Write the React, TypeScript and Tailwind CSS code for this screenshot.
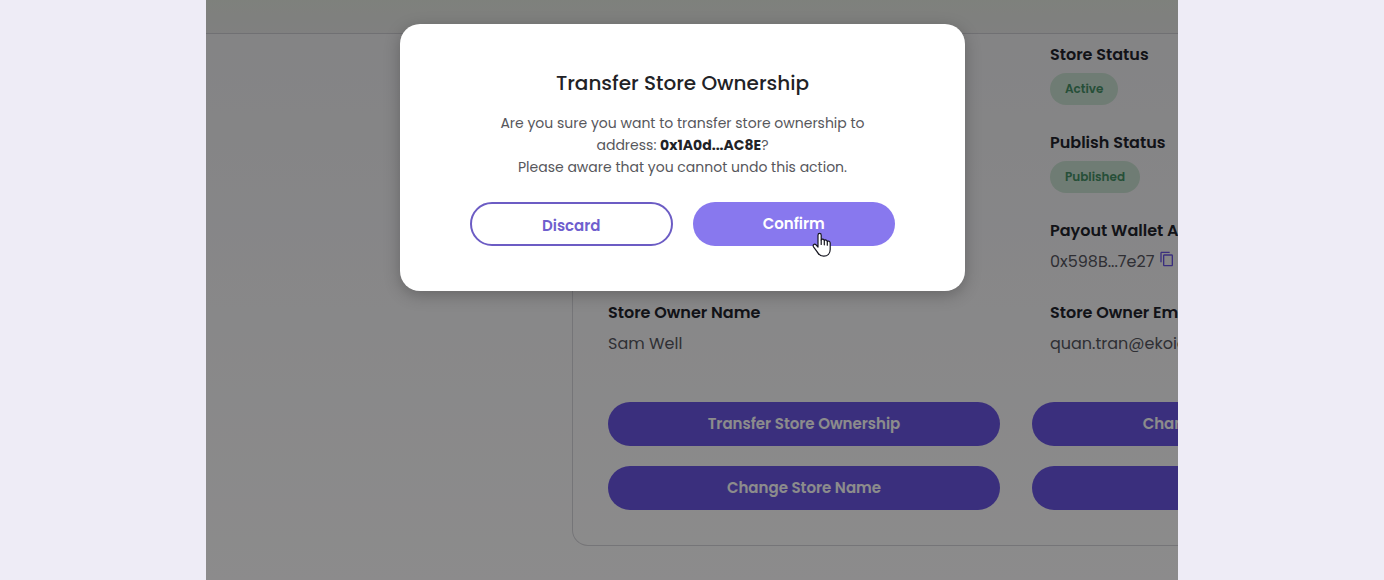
import type { ReactNode } from "react";
import { MdContentCopy } from "react-icons/md";

interface FieldProps {
    label: string;
    className?: string;
    children: ReactNode;
}

function Field({ label, className = "", children }: FieldProps) {
    return (
        <div className={className}>
            <dt className="mb-1.5 font-semibold text-[#22242c]">{label}</dt>
            <dd className="leading-[26px] text-[#56575f]">{children}</dd>
        </div>
    );
}

function StatusBadge({ children }: { children: ReactNode }) {
    return (
        <span className="flex h-8 w-fit items-center rounded-full bg-[#cbe2d3] px-[15px] text-xs font-semibold text-[#459066]">
            {children}
        </span>
    );
}

function ActionButton({ children }: { children: ReactNode }) {
    return (
        <button type="button" className="h-11 rounded-full bg-[#6b57e4] text-[15px] font-semibold text-white">
            {children}
        </button>
    );
}

function HandCursor() {
    return (
        <svg
            aria-hidden="true"
            viewBox="0 0 20 26"
            className="pointer-events-none absolute top-[30px] left-[119px] h-[26px] w-5"
            fill="white"
            stroke="#15151f"
            strokeWidth="1.2"
            strokeLinejoin="round"
            strokeLinecap="round"
        >
            <path d="M6 15V3.2C6 .8 9.2.8 9.2 3.2V8C9.8 6.6 12.3 7 12.3 8.6C13 7.5 15.3 7.9 15.3 9.6C16.2 8.6 18.2 9.2 18.2 11V17.5C18.2 21.5 15.6 24.2 11.8 24.2C8.2 24.2 6.5 22.5 5 19.6L1.5 14.8C.4 12.8 2.5 11.5 4 12.8Z" />
            <path d="M9.2 8V12.5M12.3 8.6V12.8M15.3 9.6V13.2" fill="none" />
        </svg>
    );
}

function StoreDetails() {
    return (
        <section className="ml-[366px] w-[888px] shrink-0 rounded-b-2xl border border-t-0 border-[#d6d6da] px-[35px] pt-[9px] pb-[35px]">
            <dl className="grid grid-cols-[442px_1fr] gap-y-[26px]">
                <Field label="Store Status" className="col-start-2">
                    <StatusBadge>Active</StatusBadge>
                </Field>
                <Field label="Publish Status" className="col-start-2">
                    <StatusBadge>Published</StatusBadge>
                </Field>
                <Field label="Payout Wallet Address" className="col-start-2">
                    <span className="flex items-center gap-[5px]">
                        0x598B...7e27
                        <button type="button" aria-label="Copy address" className="-mt-1.5 text-[#6b55e6]">
                            <MdContentCopy className="size-4" />
                        </button>
                    </span>
                </Field>
                <Field label="Store Owner Name" className="col-start-1">
                    Sam Well
                </Field>
                <Field label="Store Owner Email">quan.tran@ekoios.vn</Field>
            </dl>
            <div className="mt-[45px] grid grid-cols-2 gap-x-8 gap-y-5">
                <ActionButton>Transfer Store Ownership</ActionButton>
                <ActionButton>Change Payout Wallet</ActionButton>
                <ActionButton>Change Store Name</ActionButton>
                <ActionButton>Close</ActionButton>
            </div>
        </section>
    );
}

function TransferDialog() {
    return (
        <div
            role="dialog"
            aria-modal="true"
            aria-labelledby="transfer-title"
            className="w-full max-w-[565px] rounded-[20px] bg-white px-[70px] pt-11 pb-[45px] text-center shadow-[0_4px_16px_rgba(0,0,0,0.25)]"
        >
            <h2 id="transfer-title" className="text-xl leading-[30px] font-medium text-[#222226]">
                Transfer Store Ownership
            </h2>
            <p className="mt-[14px] text-sm leading-[22px] text-[#57575c]">
                Are you sure you want to transfer store ownership to
                <br />
                address: <strong className="font-bold text-[#222226]">0x1A0d...AC8E</strong>?
                <br />
                Please aware that you cannot undo this action.
            </p>
            <div className="mt-6 grid grid-cols-2 gap-5">
                <button
                    type="button"
                    className="h-11 rounded-full border-2 border-[#6c5cc4] pt-1 text-[15px] font-semibold text-[#6f5fce]"
                >
                    Discard
                </button>
                <div className="relative">
                    <button
                        type="button"
                        className="h-11 w-full rounded-full bg-[#8878ee] text-[15px] font-semibold text-white"
                    >
                        Confirm
                    </button>
                    <HandCursor />
                </div>
            </div>
        </div>
    );
}

export default function App() {
    return (
        <div className="min-h-screen bg-[#eeecf6] font-['Poppins','Inter',sans-serif] text-base">
            <main className="relative mx-auto min-h-screen max-w-[972px] overflow-hidden bg-linear-to-b from-[#efeff2] to-[#fffeff]">
                <header className="h-[34px] border-b border-[#cdcdd1] bg-linear-to-b from-[#e6ebe2] to-[#e9e9e9]" />
                <StoreDetails />
                <div className="absolute inset-0 flex items-start justify-center bg-black/45 pt-6 pr-[19px]">
                    <TransferDialog />
                </div>
            </main>
        </div>
    );
}
